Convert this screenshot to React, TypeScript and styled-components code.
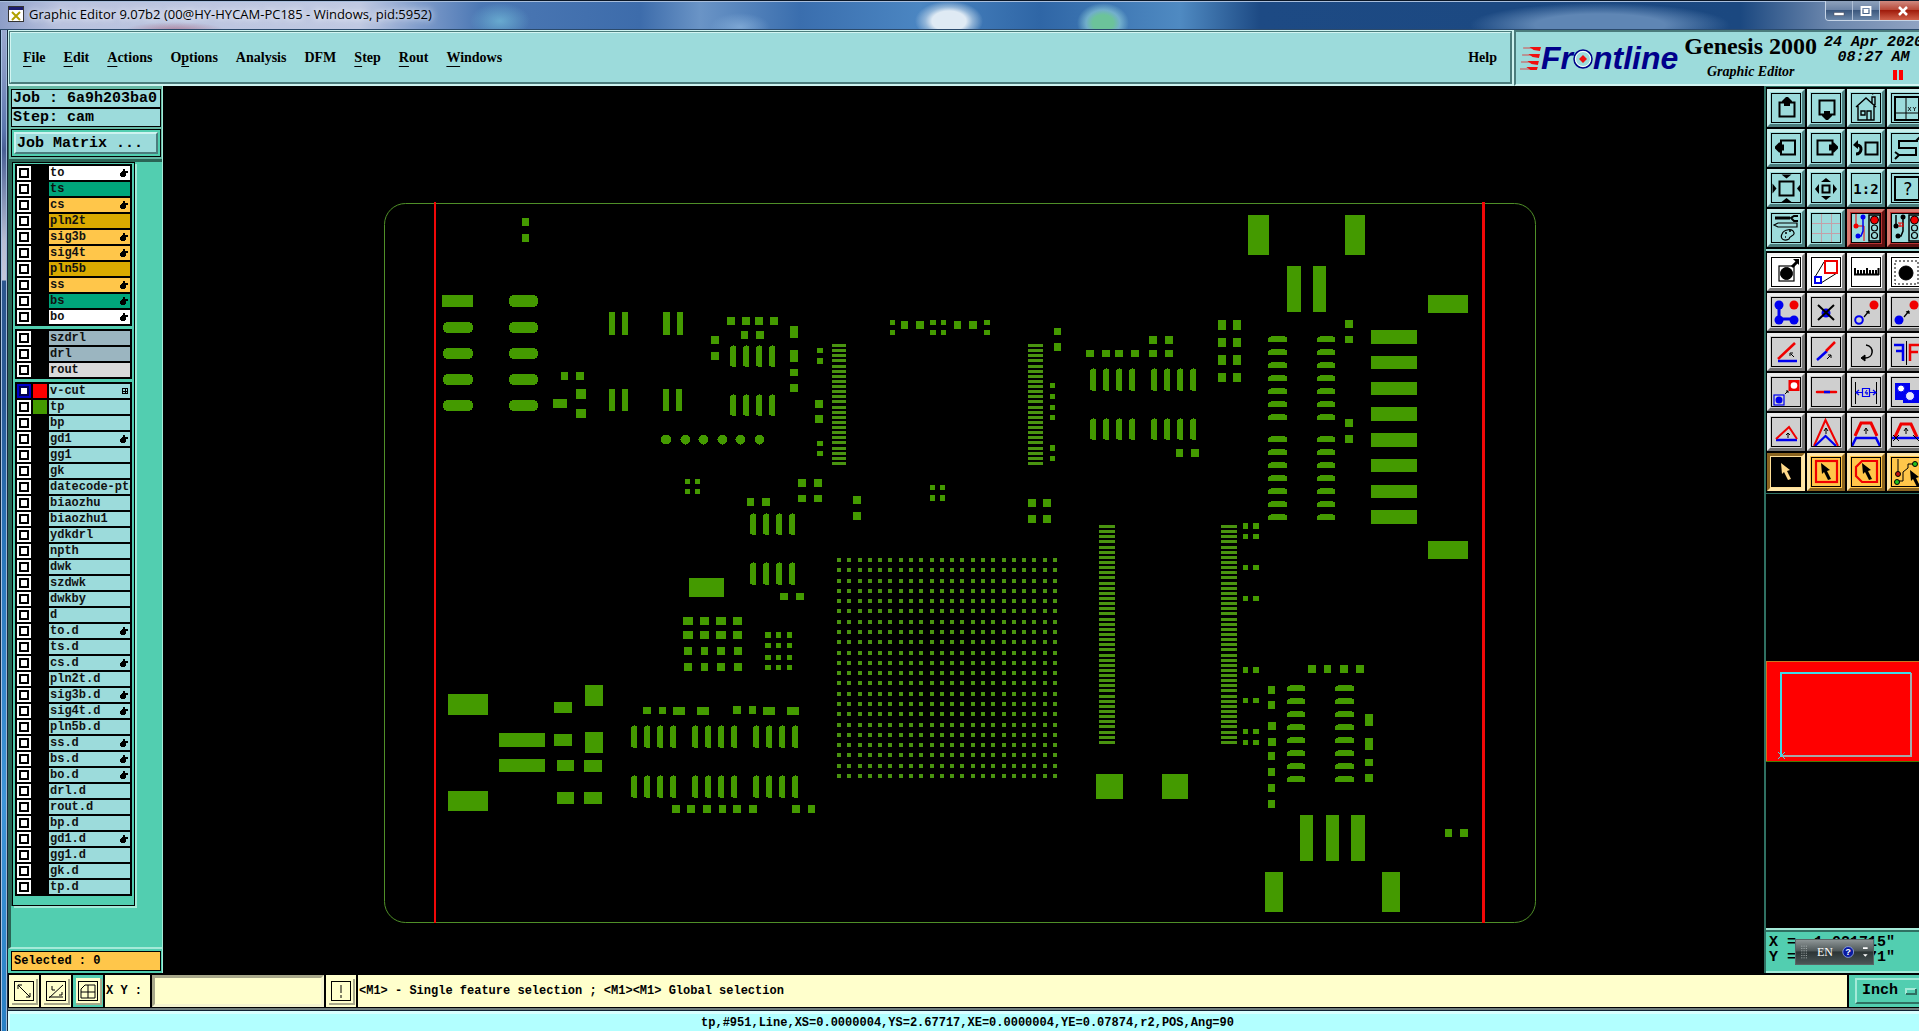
import React, { ReactNode } from 'react';
import styled, { createGlobalStyle, css } from 'styled-components';

const serif = '"Liberation Serif", "Times New Roman", serif';
const mono = '"Liberation Mono", "Courier New", monospace';
const aqua = '#9cdbdb';
const mint = '#52ceb0';
const copper = '#449a00';

const GlobalStyle = createGlobalStyle`
  * { box-sizing: border-box; }
  body { margin: 0; background: #000; overflow: hidden; }
  button, input, select { font: inherit; color: inherit; margin: 0; border-radius: 0; }
`;

/* ---------- window chrome ---------- */

const Desktop = styled.div`
  overflow: hidden;
  width: 100%;
  height: 100vh;
`;

const Frame = styled.div`
  display: flex;
  flex-direction: column;
  width: calc(100% + 8px);
  height: 100%;
  padding-left: 8px;
  background: linear-gradient(90deg, #10243c 0 1px, #a9c4e4 1px 2px, transparent 2px 6px, #9fb9da 6px 7px, #16283c 7px 8px),
    linear-gradient(180deg, #aab4d6 0, #8698c4 70px, #5b76ae 130px, #4a5f95 150px, #b7bdd2 240px, #c4c8da 280px, #2c568e 281px, #2a5a96 400px, #2a74b8 540px, #3f95d8 800px, #2a80c4 100%);
`;

const TitleBar = styled.header`
  display: flex;
  align-items: center;
  flex: 0 0 30px;
  gap: 5px;
  margin-left: -8px;
  padding: 0 0 2px 8px;
  border-top: 1px solid #0a1626;
  border-bottom: 1px solid #2b4a6c;
  box-shadow: inset 0 1px 0 #a8bedc;
  color: #000;
  font: 13px/16px "Open Sans", "Noto Sans", sans-serif;
  background:
    radial-gradient(ellipse 30px 18px at 500px 20px, #6fb6d6cc, transparent),
    radial-gradient(ellipse 50px 8px at 175px 29px, #a86a84aa, transparent),
    radial-gradient(ellipse 30px 14px at 740px 26px, #8fb7e0aa, transparent),
    radial-gradient(ellipse 34px 20px at 949px 20px, #dfeaf4 0 50%, #b8d0e6aa 70%, transparent),
    radial-gradient(ellipse 26px 20px at 1103px 22px, #6cc39a 0 40%, #8ccbd8aa 65%, transparent),
    radial-gradient(ellipse 130px 22px at 1600px 24px, #5f86b4 0 50%, transparent),
    linear-gradient(90deg, #8d9ec8 0, #b9c2de 60px, #c0c9e2 360px, #7f9ccb 420px, #4c78b4 480px, #3d6cab 640px, #6a94c6 700px, #3a6eae 800px, #4b86c2 920px, #2f66a6 1040px, #4f8ac2 1180px, #1d4a84 1260px, #1b4880 1740px, #6c87ad 1830px, #93a5c4 100%);
`;

const Title = styled.span`flex: 1; white-space: nowrap; text-shadow: 0 0 6px #fff, 0 0 8px #dfe6f4;`;

const Caption = styled.div`
  display: flex;
  align-self: flex-start;
  height: 20px;
  border: solid #c6d4e6;
  border-width: 0 1px 1px;
  border-radius: 0 0 4px 4px;
  overflow: hidden;
`;

const CaptionButton = styled.button<{ $close?: boolean }>`
  display: grid;
  place-items: center;
  width: ${p => (p.$close ? 46 : 27)}px;
  padding: 0;
  border: 0;
  border-right: 1px solid #b0c0d6;
  background: ${p => p.$close
    ? 'linear-gradient(#d08a80, #b84a3a 45%, #a01c0c 50%, #d0604a)'
    : 'linear-gradient(#8ea2bc, #6c84a6 45%, #3c587e 50%, #6a86a8)'};
`;

/* ---------- menu row ---------- */

const TopRow = styled.div`
  display: flex;
  flex: 0 0 56px;
  background: #cdf3f0;
`;

const MenuBar = styled.nav`
  display: flex;
  align-items: center;
  flex: 1;
  gap: 18px;
  margin: 1px 2px 2px 1px;
  padding: 0 13px 0 12px;
  border: 2px solid;
  border-color: #d3f5f2 #4b7c7c #4b7c7c #d3f5f2;
  outline: 1px solid #4b7c7c;
  outline-offset: -1px;
  background: ${aqua};
  font: bold 14px/18px ${serif};
`;

const MenuItem = styled.button<{ $end?: boolean }>`
  padding: 0;
  border: 0;
  background: none;
  margin-left: ${p => (p.$end ? 'auto' : '0')};
  u { text-underline-offset: 4px; text-decoration-thickness: 1px; }
`;

const Brand = styled.section`
  display: flex;
  flex: 0 0 413px;
  padding: 0 3px 0 4px;
  gap: 6px;
  background: ${aqua};
  border: solid #4b7c7c;
  border-width: 2px 0 0 2px;
  border-bottom: 2px solid #d3f5f2;
`;

const Logo = styled.div`
  display: flex;
  align-items: center;
  color: #00008b;
  font: italic bold 32px/36px "Liberation Sans", Arial, sans-serif;
  svg { flex: none; }
`;

const Product = styled.div`
  text-align: center;
  font-family: ${serif};
  font-weight: bold;
  white-space: nowrap;
`;
const ProductName = styled.div`font-size: 24px; line-height: 28px;`;
const ProductPart = styled.div`font-size: 14px; line-height: 24px; font-style: italic;`;

const Clock = styled.time`
  flex: none;
  padding: 3px 0 0 1px;
  text-align: center;
  white-space: nowrap;
  font: italic bold 15px/15px ${mono};
  svg { display: block; margin: 5px 0 0 69px; }
`;

/* ---------- left side ---------- */

const Main = styled.main`
  display: flex;
  flex: 1;
  min-height: 0;
  background: #000;
`;

const Side = styled.aside`
  display: flex;
  flex-direction: column;
  flex: 0 0 155px;
  background: ${mint};
  border-right: 1px solid #a4ead8;
`;

const JobInfo = styled.section`
  padding: 3px 1px 2px 2px;
  background: #66b8a4;
  border-left: 1px solid #2a6455;
`;

const InfoLine = styled.div`
  height: 19px;
  padding-left: 1px;
  border: 1px solid #000;
  background: ${aqua};
  font: bold 15px/18px ${mono};
  white-space: pre;
`;

const MatrixBox = styled.div`
  margin-top: 2px;
  padding: 2px;
  border: 1px solid #000;
  background: ${mint};
`;

const MatrixButton = styled.button`
  display: block;
  width: 100%;
  height: 22px;
  padding: 0 0 0 1px;
  border: 2px solid;
  border-color: #cdf3f0 #4b7c7c #4b7c7c #cdf3f0;
  background: ${aqua};
  font: bold 15px/17px ${mono};
  text-align: left;
`;

const LayerPanel = styled.section`
  flex: 1;
  border: solid #2a6455;
  border-width: 3px 0 0 3px;
  border-bottom: 2px solid #a4ead8;
`;

const LayerFrame = styled.div`
  display: flex;
  flex-direction: column;
  gap: 3px;
  width: 123px;
  margin-left: 1px;
  padding: 1px 2px 9px;
  border: 1px solid #000;
  box-shadow: 2px 2px 0 #a4ead8, -1px 0 0 #2a6455;
`;

const LayerGroup = styled.ul`
  display: grid;
  gap: 2px;
  margin: 0;
  padding: 2px;
  list-style: none;
  background: #000;
`;

const LayerRow = styled.li`
  display: grid;
  grid-template-columns: 14px 14px 1fr;
  gap: 2px;
  height: 14px;
`;

const LayerBox = styled.input`
  appearance: none;
  width: 14px;
  height: 14px;
  background: #fff;
  box-shadow: inset 0 0 0 2px #fff, inset 0 0 0 4px #000;
  &:checked { box-shadow: inset 0 0 0 2px #0000c8, inset 0 0 0 4px #000050; }
`;

const Swatch = styled.span<{ $color?: string }>`background: ${p => p.$color ?? '#000'};`;

const LayerName = styled.label<{ $bg: string }>`
  display: flex;
  align-items: center;
  justify-content: space-between;
  min-width: 0;
  overflow: hidden;
  white-space: nowrap;
  padding: 0 2px 0 1px;
  background: ${p => p.$bg};
  font: bold 12px/13px ${mono};
  color: #111;
  svg { flex: none; }
`;

const SelectedBox = styled.div`
  margin: 2px 1px 2px 3px;
  height: 20px;
  padding-left: 2px;
  border: 1px solid #000;
  background: #ffc64a;
  font: bold 12px/18px ${mono};
  white-space: pre;
`;

/* ---------- canvas ---------- */

const Canvas = styled.section`
  flex: 1;
  min-width: 0;
  svg { display: block; width: 100%; height: 100%; }
`;

/* ---------- right side ---------- */

const Tools = styled.aside`
  display: flex;
  flex-direction: column;
  flex: 0 0 163px;
  border-left: 2px solid #2f7062;
`;

const ToolGroup = styled.div`
  display: grid;
  grid-template-columns: repeat(4, 38px);
  gap: 2px;
  padding: 3px 0 2px 1px;
  background: #000;
  & + & { border-top: 2px solid #a4dcd8; padding-top: 2px; }
  &:first-child { border-top: 1px solid #2f7062; padding-top: 2px; }
`;

type Tone = 'aqua' | 'red' | 'white' | 'gray' | 'amber' | 'pressed';
const tones: Record<Tone, [string, string, string, string]> = {
  aqua: [aqua, '#c8efec', '#4b7c7c', aqua],
  red: ['#b83434', '#d87a70', '#5c1010', aqua],
  white: ['#fff', '#f4f4f4', '#808080', '#fff'],
  gray: ['#cfcfcf', '#ececec', '#747474', '#cfcfcf'],
  amber: ['#ffc64a', '#ffe6a8', '#8a6420', '#ffc64a'],
  pressed: ['#ffdf96', '#8a6420', '#ffe6a8', '#000'],
};

const ToolButton = styled.button<{ $tone: Tone }>`
  display: grid;
  place-items: center;
  width: 38px;
  height: 38px;
  padding: 0;
  border: 3px solid;
  ${p => {
    const [bg, light, dark, inner] = tones[p.$tone];
    return css`
      background: ${bg};
      border-color: ${light} ${dark} ${dark} ${light};
      svg { background: ${inner}; outline: 1px solid #000; outline-offset: -1px; }
    `;
  }}
  svg { display: block; }
`;

const MapPane = styled.section`
  display: flex;
  flex: 1;
  align-items: center;
  border-top: 1px solid #2f7062;
  background: #000;
  svg { width: 100%; }
`;

const Coords = styled.section`
  position: relative;
  padding: 5px 0 6px 3px;
  border: solid;
  border-width: 2px 0;
  border-color: #a4ead8;
  background: ${mint};
  box-shadow: inset 0 2px 0 #2f7062;
  font: bold 15px/15px ${mono};
  white-space: pre;
`;

const LangBar = styled.div`
  position: absolute;
  left: 29px;
  top: 9px;
  display: flex;
  align-items: center;
  width: 79px;
  height: 26px;
  padding: 0 5px;
  gap: 9px;
  color: #fff;
  font: 12px/24px ${serif};
  background: linear-gradient(#8d9596, #4f5859 45%, #2c3536 50%, #4a5556);
  border: 1px solid #5a6465;
`;
const LangButton = styled.button`padding: 0; border: 0; background: none; color: #fff;`;

/* ---------- bottom ---------- */

const BottomBar = styled.footer`
  display: flex;
  flex: none;
  gap: 2px;
  height: 35px;
  padding: 2px 0 1px 1px;
  background: #000;
  font: bold 12px/32px ${mono};
`;

const ModeButton = styled.button<{ $on?: boolean }>`
  display: grid;
  place-items: center;
  width: 30px;
  padding: 0;
  border: 3px solid ${p => (p.$on ? mint : '#ffffcc')};
  background: #ffffcc;
  svg { display: block; box-shadow: 0 0 0 2px #ffffcc, 1px 1px 0 3px #a8a88a; }
`;

const XYLabel = styled.label`
  width: 45px;
  padding-left: 1px;
  background: #ffffcc;
  white-space: pre;
`;

const XYInput = styled.input`
  width: 172px;
  padding: 0 4px;
  border: 3px solid;
  border-color: #a8a88a #f4f4d0 #f4f4d0 #a8a88a;
  background: #ffffcc;
  outline: none;
`;

const Message = styled.output`
  flex: 1;
  min-width: 0;
  padding-left: 1px;
  background: #ffffcc;
  white-space: nowrap;
`;

const UnitBox = styled.label`
  display: flex;
  align-items: center;
  width: 78px;
  padding: 3px 0 3px 6px;
  background: ${mint};
`;
const UnitField = styled.span`
  display: flex;
  align-items: center;
  width: 100%;
  height: 26px;
  padding-left: 5px;
  border: 2px solid;
  border-color: #a4ead8 #2f7062 #2f7062 #a4ead8;
`;
const UnitSelect = styled.select`
  appearance: none;
  width: 43px;
  padding: 0;
  border: 0;
  background: transparent;
  font: bold 15px/20px ${mono};
`;

const StatusBar = styled.div`
  flex: none;
  height: 23px;
  border-top: 2px solid #6e7c7c;
  box-shadow: inset 0 1px 0 #123, inset 0 4px 0 #d8ffff, inset 2px 0 0 #d8ffff;
  background: #b2ffff;
  font: bold 12px/26px ${mono};
  text-align: center;
  white-space: nowrap;
`;

/* ---------- board artwork ---------- */

type Box = [number, number, number, number];

const cross = (xs: number[], ys: number[], w: number, h: number): Box[] =>
  ys.flatMap(y => xs.map(x => [x, y, w, h] as Box));
const steps = (from: number, step: number, count: number) =>
  Array.from({ length: count }, (_, i) => Math.round(from + step * i));

const pads: Box[] = [
  ...cross([522], [218, 234], 7, 8),
  [442, 295, 31, 12], [561, 372, 7, 8], [576, 372, 8, 8], [553, 399, 14, 9], [576, 389, 10, 10], [576, 409, 10, 9],
  ...cross([609, 622], [312], 6, 23), [663, 312, 7, 23], [677, 312, 6, 23],
  ...cross([609, 622, 663, 676], [389], 6, 22),
  ...cross([711], [336, 352], 8, 8), ...cross([727, 742, 755, 770], [317], 8, 8), [741, 331, 7, 8], [756, 331, 8, 8],
  ...cross([790], [326, 350], 8, 12), [790, 369, 8, 7], [790, 384, 8, 8],
  [817, 348, 6, 5], [817, 358, 6, 6], ...cross([815], [400, 415], 8, 8), ...cross([817], [441, 451], 6, 5),
  ...cross([685, 695], [479, 489], 5, 5), ...cross([798, 814], [479], 8, 8), ...cross([798, 814], [495], 8, 7),
  [747, 498, 7, 8], [762, 498, 8, 8],
  ...cross([890, 941], [320, 330], 5, 5), ...cross([930, 984], [320, 330], 6, 5),
  ...cross([901, 954], [321], 7, 8), ...cross([916, 969], [321], 8, 8),
  [1054, 328, 7, 7], [1054, 343, 7, 8], ...cross([1050], [383, 394, 405, 415, 456], 5, 5), [1050, 445, 5, 6],
  ...cross([1086, 1102, 1115, 1131, 1149, 1165], [350], 8, 7), ...cross([1149, 1165], [336], 8, 8),
  [1176, 449, 7, 8], [1191, 449, 8, 8],
  ...cross([1218, 1233], [320, 355], 8, 10), ...cross([1218, 1233], [338, 373], 8, 9),
  ...cross([853], [496, 512], 8, 8), ...cross([930, 940], [485], 5, 5), ...cross([930, 940], [495], 5, 6),
  ...cross([1028, 1043], [499, 515], 8, 8),
  [1248, 215, 21, 40], [1345, 215, 20, 40], [1287, 266, 14, 46], [1313, 266, 13, 46],
  ...cross([1428], [295, 541], 40, 18),
  ...cross([1345], [320, 419, 435], 8, 8), [1345, 336, 8, 7],
  ...cross([1371], [330, 407, 433, 510], 46, 14), ...cross([1371], [356, 382, 459, 485], 46, 13),
  ...cross([1243], [523, 667], 5, 6), ...cross([1253], [523, 667], 6, 6),
  ...cross([1243], [534, 565, 596, 698, 729, 740], 5, 5), ...cross([1253], [534, 565, 596, 698, 729, 740], 6, 5),
  ...cross([1308, 1340, 1356], [665], 8, 8), [1324, 665, 7, 8],
  ...cross([1268], [686, 701, 752, 768, 784, 800], 7, 8), ...cross([1268], [722, 738], 8, 8),
  ...cross([1365], [714, 738], 8, 12), [1365, 759, 8, 7], [1365, 774, 8, 8],
  ...cross([1300, 1326], [815], 13, 46), [1351, 815, 14, 46], ...cross([1265, 1382], [872], 18, 40),
  [1445, 829, 7, 8], [1460, 829, 8, 8],
  [689, 578, 35, 19], ...cross([780, 796], [593], 8, 7),
  ...cross([683, 716], [617, 631], 10, 8), ...cross([700, 733], [617, 631], 9, 8),
  ...cross([684, 717, 734], [647, 663], 8, 8), ...cross([701], [647, 663], 7, 8),
  [765, 632, 6, 6], ...cross([776, 787], [632], 5, 6), ...cross([765], [643, 655, 665], 6, 5), ...cross([776, 787], [643, 655, 665], 5, 5),
  [448, 694, 40, 21], [448, 791, 40, 20], [554, 702, 18, 11], [554, 734, 18, 12], ...cross([585], [685, 732], 18, 21),
  [499, 733, 46, 14], [499, 759, 46, 13], [557, 760, 17, 11], [557, 792, 17, 12], ...cross([584], [760, 792], 18, 12),
  [643, 707, 8, 7], [659, 707, 7, 7], ...cross([673, 697, 763, 787], [707], 12, 8), [733, 706, 8, 8], [749, 706, 7, 8],
  ...cross([672, 687, 703, 733, 749, 792], [805], 8, 8), ...cross([719, 808], [805], 7, 8),
  [1096, 774, 27, 25], [1162, 774, 26, 25],
];

const ovals: Box[] = [
  ...cross([443], [322, 348, 374, 400], 30, 11), [509, 295, 29, 12], ...cross([509], [322, 348, 374, 400], 29, 11),
];

const fingers: Box[] = [
  ...cross([730, 743, 756, 769], [345, 394], 6, 22),
  ...cross([1090, 1103, 1116, 1129, 1151, 1164, 1177, 1190], [368], 6, 23),
  ...cross([1090, 1103, 1116, 1129, 1151, 1164, 1177, 1190], [418], 6, 22),
  ...cross([750, 763, 776, 789], [513], 6, 22), ...cross([750, 763, 776, 789], [562], 6, 23),
  ...cross([631, 644, 657, 670, 692, 705, 718, 731, 753, 766, 779, 792], [725, 775], 6, 23),
];

const leads: Box[] = [
  ...cross([1268], steps(336, 13, 7), 19, 6), ...cross([1317], steps(336, 13, 7), 18, 6),
  ...cross([1268], steps(436, 13, 7), 19, 6), ...cross([1317], steps(436, 13, 7), 18, 6),
  ...cross([1287], steps(685, 13, 8), 18, 6), ...cross([1335], steps(685, 13, 8), 19, 6),
];

const combs: Box[] = [
  ...cross([832], steps(344, 5.13, 24), 14, 3), ...cross([1028], steps(344, 5.13, 24), 15, 3),
  ...cross([1099, 1221], steps(525, 5.14, 43), 16, 3),
];

const ballGrid = cross(steps(837, 10.286, 22), steps(558, 10.286, 22), 4, 4);

const rectPath = (list: Box[]) => list.map(([x, y, w, h]) => `M${x} ${y}h${w}v${h}h${-w}z`).join('');
const leadPath = (list: Box[]) =>
  list.map(([x, y, w, h]) => `M${x} ${y + 2}h1v-1h2v-1h${w - 5}v1h2v${h - 1}h${-w}z`).join('');
const fingerPath = (list: Box[]) =>
  list.map(([x, y, , h]) => `M${x} ${y + 2}h1v-1h2v-1h1v1h2v${h - 1}h-4v-1h-2z`).join('');

function Board() {
  return (
    <svg viewBox="163 86 1601 887" role="img" aria-label="Board view">
      <rect x="384.5" y="203.5" width="1151" height="719" rx="21" fill="none" stroke="#4f8f28" />
      <g fill={copper} shapeRendering="crispEdges">
        <path d={rectPath(pads)} />
        <path d={fingerPath(fingers)} />
        <path d={leadPath(leads)} />
        {ovals.map(([x, y, w, h]) => <rect key={`${x}-${y}`} x={x} y={y} width={w} height={h} rx="5" />)}
        {[666, 685.5, 703.5, 722.5, 740.5, 759.5].map(x => <circle key={x} cx={x} cy="439.5" r="5" />)}
        <path d={rectPath(ballGrid)} fill="#4a9410" />
        <path d={rectPath(combs)} fill="#4a9410" />
      </g>
      <g fill="#f00808" shapeRendering="crispEdges">
        <rect x="434" y="202" width="2" height="721" />
        <rect x="1482" y="202" width="3" height="721" />
      </g>
    </svg>
  );
}

/* ---------- layers ---------- */

type Layer = { name: string; bg?: string; hand?: boolean; swatch?: string; active?: boolean };
const parse = (text: string): Layer[] =>
  text.split(' ').map(word => ({ name: word.replace('*', ''), hand: word.endsWith('*') }));

const boardLayers: Layer[] = [
  { name: 'to', bg: '#fff', hand: true }, { name: 'ts', bg: '#00a57b' }, { name: 'cs', bg: '#ffc64a', hand: true },
  { name: 'pln2t', bg: '#daaa00' }, { name: 'sig3b', bg: '#ffc64a', hand: true }, { name: 'sig4t', bg: '#ffc64a', hand: true },
  { name: 'pln5b', bg: '#daaa00' }, { name: 'ss', bg: '#ffc64a', hand: true }, { name: 'bs', bg: '#00a57b', hand: true },
  { name: 'bo', bg: '#fff', hand: true },
];
const drillLayers: Layer[] = [
  { name: 'szdrl', bg: '#9bb5c0' }, { name: 'drl', bg: '#9bb5c0' }, { name: 'rout', bg: '#dadada' },
];
const miscLayers: Layer[] = [
  { name: 'v-cut', swatch: '#f00', active: true }, { name: 'tp', swatch: copper },
  ...parse('bp gd1* gg1 gk datecode-ptc biaozhu biaozhu1 ydkdrl npth dwk szdwk dwkby d to.d* ts.d cs.d* pln2t.d sig3b.d* sig4t.d* pln5b.d ss.d* bs.d* bo.d* drl.d rout.d bp.d gd1.d* gg1.d gk.d tp.d'),
];

const Hand = () => (
  <svg width="8" height="8" viewBox="0 0 8 8" aria-hidden="true"><path d="M3 0h2v2h3v2H6v3H5v1H1V7H0V4h1V3h1V2h1z" /></svg>
);
const GridMark = () => (
  <svg width="6" height="6" viewBox="0 0 6 6" aria-hidden="true" shapeRendering="crispEdges">
    <path d="M.5.5h5v5h-5zM3 0v6M0 3h6" fill="none" stroke="#000" />
  </svg>
);

function Layers({ items }: { items: Layer[] }) {
  return (
    <LayerGroup>
      {items.map(l => (
        <LayerRow key={l.name}>
          <LayerBox type="checkbox" id={`layer-${l.name}`} defaultChecked={l.active} />
          <Swatch $color={l.swatch} />
          <LayerName htmlFor={`layer-${l.name}`} $bg={l.bg ?? aqua}>
            {l.name}
            {l.hand && <Hand />}
            {l.active && <GridMark />}
          </LayerName>
        </LayerRow>
      ))}
    </LayerGroup>
  );
}

/* ---------- tool icons, drawn in button coordinates ---------- */

type Tool = { label: string; tone: Tone; art: ReactNode };
const R = '#f00000';
const B = '#0000f0';

const up = (x: number, y: number) => <path d={`M${x - 5} ${y + 5}l4-4h2l4 4v2h-2v3h-6v-3h-2z`} fill="#000" stroke="none" />;
const turned = (x: number, y: number, deg: number) => <g transform={`translate(${x} ${y}) rotate(${deg})`}>{up(0, 0)}</g>;
const tri = (x: number, y: number, deg: number) => (
  <path d="M-5 4l5-4 5 4z" fill="#000" stroke="none" transform={`translate(${x} ${y}) rotate(${deg})`} />
);
const cursor = (fill: string, x = 14, y = 10) => (
  <path d="M0 0l9 7-3 1 4 8-3 1-4-8-2 2z" transform={`translate(${x} ${y})`} fill={fill} stroke="none" />
);
const lights = (
  <>
    <rect x="22" y="6" width="11" height="26" strokeWidth="1.5" />
    <circle cx="27.500" cy="11" r="4" fill={R} stroke="#000" strokeWidth="1" />
    <circle cx="27.500" cy="19" r="3" strokeWidth="1.2" />
    <circle cx="27.500" cy="26.500" r="3" strokeWidth="1.2" />
  </>
);

const viewTools: Tool[] = [
  { label: 'Pan up', tone: 'aqua', art: <><rect x="12.500" y="13.500" width="15" height="14" strokeWidth="2" />{up(20, 7)}</> },
  { label: 'Pan down', tone: 'aqua', art: <><rect x="12.500" y="11.500" width="15" height="14" strokeWidth="2" />{turned(20, 32, 180)}</> },
  { label: 'Home', tone: 'aqua', art: <path d="M9 18L19 9l10 9M11 17v14h16V17M14 22h4v4h-4zM20 31v-9h4v9M25 14V8h3v8M25 5l2-1M28 3l2-1" strokeWidth="1.4" /> },
  { label: 'Zoom XY', tone: 'aqua', art: <><rect x="8" y="8" width="24" height="23" strokeWidth="2" /><path d="M19 8v23M8 24h24" strokeWidth="1" /><path d="M21 18l3 4M24 18l-3 4M26 18l1.500 2 1.500-2M27.500 20v2" strokeWidth=".8" /></> },
  { label: 'Pan left', tone: 'aqua', art: <><rect x="14" y="11.500" width="14" height="14" strokeWidth="2" />{turned(7, 18.5, -90)}</> },
  { label: 'Pan right', tone: 'aqua', art: <><rect x="10.500" y="11.500" width="15" height="14" strokeWidth="2" />{turned(32, 18.5, 90)}</> },
  { label: 'Previous view', tone: 'aqua', art: <><rect x="18.500" y="13.500" width="12" height="12" strokeWidth="2" /><path d="M9 25c6 0 7-9 1-9" strokeWidth="3" /><path d="M6 16l5-5v9z" fill="#000" stroke="none" /></> },
  { label: 'Serpentine', tone: 'aqua', art: <path d="M31 12H12v7h17v7H12M12 26l-4-3M12 26l-4 4M29 12l4-4" strokeWidth="2" /> },
  { label: 'Zoom out', tone: 'aqua', art: <><rect x="12.500" y="12.500" width="14" height="14" strokeWidth="2" />{tri(19.5, 9.5, 180)}{tri(19.5, 29, 0)}{tri(9.5, 19.5, 90)}{tri(30, 19.5, -90)}</> },
  { label: 'Zoom in', tone: 'aqua', art: <><rect x="15.500" y="16.500" width="7" height="7" strokeWidth="2" />{tri(19, 9, 0)}{tri(19, 31, 180)}{tri(8, 20, -90)}{tri(30, 20, 90)}</> },
  { label: 'Scale 1:2', tone: 'aqua', art: <text x="19" y="25" textAnchor="middle" fontFamily="DejaVu Sans Mono" fontSize="14" fontWeight="bold" fill="#000" stroke="none">1:2</text> },
  { label: 'Query', tone: 'aqua', art: <><rect x="8" y="8" width="24" height="23" strokeWidth="2" /><text x="20.500" y="26" textAnchor="middle" fontFamily="DejaVu Sans Mono" fontSize="17" fill="#000" stroke="none">?</text></> },
  { label: 'Settings', tone: 'aqua', art: <><path d="M8 9h15" strokeWidth="3" /><path d="M31 7h-4l-3 2 3 3h4" strokeWidth="2" /><path d="M7 16l4-2h19v4H11zM15 25c2-5 11-6 12-1 1 3-5 3-5 6-6 3-9-1-7-5z" strokeWidth="1.2" /><path d="M18 24h2M22 22h2M18 28h1" strokeWidth="1.5" /></> },
  { label: 'Grid', tone: 'aqua', art: <path d="M14.500 5v28M24.500 5v28M5 14.500h28M5 24.500h28" stroke="#c4a0a8" strokeWidth="1" /> },
  { label: 'Highlight net', tone: 'red', art: <><path d="M9 5v12l8 0V32" stroke={R} strokeWidth="1" /><path d="M16 8v14l-2 5h-4" stroke={B} strokeWidth="1.5" /><circle cx="9" cy="17" r="2.500" fill={R} stroke="none" /><circle cx="16" cy="8" r="2.500" fill={B} stroke="none" /><circle cx="11" cy="27" r="2.500" fill={B} stroke="none" />{lights}</> },
  { label: 'Select net', tone: 'red', art: <><path d="M9 6v10M16 8v14l-2 5h-4" strokeWidth="1.5" /><path d="M11 14h5M11 17h5M13 14v4M16 14v4" stroke={R} strokeWidth="1" /><circle cx="9" cy="17" r="2.500" fill="#000" stroke="none" /><circle cx="16" cy="8" r="2.500" fill="#000" stroke="none" /><circle cx="11" cy="27" r="2.500" fill="#000" stroke="none" />{lights}</> },
];

const nib = <path d="M17 24l5-6M22 18l-3 1M22 18v3" strokeWidth="1.200" />;
const editTools: Tool[] = [
  { label: 'Move', tone: 'white', art: <><rect x="12" y="13" width="15" height="15" strokeWidth="1.200" /><circle cx="19.500" cy="20.500" r="6" fill="#000" /><path d="M25 14l5-5" strokeWidth="3" /><path d="M26 6h6v6z" fill="#000" stroke="none" /></> },
  { label: 'Resize', tone: 'white', art: <><path d="M8 24l9-15M14 30l16-10" strokeWidth="1" /><rect x="18" y="8" width="12" height="12" stroke={R} strokeWidth="2" /><rect x="8" y="24" width="6" height="6" stroke={B} strokeWidth="2" /></> },
  { label: 'Measure', tone: 'white', art: <path d="M7 21.500h25M8 15v7M11 17v5M14 17v5M17 17v5M20 15v7M23 17v5M26 17v5M29 17v5M31.500 15v7" strokeWidth="2" /> },
  { label: 'Select area', tone: 'white', art: <><rect x="8" y="8" width="23" height="23" strokeDasharray="2 2" strokeWidth="1" /><circle cx="19" cy="20" r="7" fill="#000" /></> },
  { label: 'Connect', tone: 'gray', art: <><path d="M12 12v14h15" stroke={B} strokeWidth="3" /><circle cx="12" cy="12" r="4.500" fill={B} stroke="none" /><circle cx="12" cy="27" r="4.500" fill={B} stroke="none" /><circle cx="27" cy="27" r="4.500" fill={B} stroke="none" /><circle cx="27" cy="12" r="4.500" fill={R} stroke="none" /></> },
  { label: 'Delete', tone: 'gray', art: <><circle cx="19" cy="20" r="4.500" fill={B} stroke="none" /><path d="M11 12l16 15M27 12L11 27" strokeWidth="2" /></> },
  { label: 'Copy', tone: 'gray', art: <><circle cx="12" cy="27" r="3.800" stroke={B} strokeWidth="2" /><circle cx="27" cy="12" r="4.500" fill={R} stroke="none" />{nib}</> },
  { label: 'Shift', tone: 'gray', art: <><circle cx="12" cy="27" r="4.500" fill={B} stroke="none" /><circle cx="27" cy="12" r="4.500" fill={R} stroke="none" />{nib}</> },
  { label: 'Angle', tone: 'gray', art: <><path d="M11 28h19" stroke={B} strokeWidth="2.500" /><path d="M11 26L28 10" stroke={R} strokeWidth="2.500" /><path d="M27 24l-3-3M23 20v3M23 20h3" strokeWidth="1" /></> },
  { label: 'Extend line', tone: 'gray', art: <><path d="M10 27l10-9" stroke={B} strokeWidth="2.500" /><path d="M19 18l9-9" stroke={R} strokeWidth="2.500" /><path d="M20 26l4-4M24 22h-3M24 22v3" strokeWidth="1" /></> },
  { label: 'Rotate', tone: 'gray', art: <><path d="M19 12c9 1 8 14-2 13" strokeWidth="1.500" /><path d="M14 25l4-3v6z" fill="#000" /></> },
  { label: 'Mirror', tone: 'gray', art: <><path d="M19.500 8v24" strokeWidth="1" /><path d="M7 12h9v16M9 18h7" stroke={B} strokeWidth="2.500" /><path d="M33 12H23v16M23 19h8" stroke={R} strokeWidth="2.500" /></> },
  { label: 'Substitute', tone: 'gray', art: <><rect x="7" y="22" width="10" height="10" stroke={B} strokeWidth="1.200" /><circle cx="12" cy="27" r="3.500" fill={B} stroke="none" /><rect x="21.500" y="7" width="11" height="11" fill={R} stroke="none" /><circle cx="27" cy="12.500" r="3.300" fill="#fff" stroke="none" /><path d="M18 21l3-3M21 18h-2M21 18v2" strokeWidth="1" /></> },
  { label: 'Break', tone: 'gray', art: <><path d="M10 19h19" stroke={R} strokeWidth="2.500" strokeLinecap="round" /><path d="M17 19h6" stroke={B} strokeWidth="2.500" /></> },
  { label: 'Spacing', tone: 'gray', art: <><path d="M8.500 9v22M29.500 9v22" strokeWidth="1" /><path d="M9 19.500h6M23 19.500h6M12 17l-3 2.500 3 2.500M26 17l3 2.500-3 2.500M15.500 15.500h7v8h-7z" stroke={B} strokeWidth="1.200" /><path d="M20 17l-2 3h3M20 19v3" stroke={B} strokeWidth="1" /></> },
  { label: 'Merge', tone: 'gray', art: <><rect x="8" y="10" width="15" height="17" fill={B} stroke="none" /><rect x="16" y="17" width="16" height="13" fill={B} stroke="none" /><circle cx="14" cy="15.500" r="3.500" fill="#fff" stroke={B} /><circle cx="23" cy="23" r="4.500" fill="#e4e4ff" stroke={B} /></> },
  { label: 'Triangle', tone: 'gray', art: <><path d="M9 27h21" stroke={B} strokeWidth="2.500" /><path d="M9 26l13-12 8 12" stroke={R} strokeWidth="2" /><path d="M21 25v-5M19 22l2-2 2 2" strokeWidth="1" /></> },
  { label: 'Peak', tone: 'gray', art: <><path d="M7 33L18.500 7l12.500 26" stroke={R} strokeWidth="2" /><path d="M8 33l10.500-10L29 33" stroke={B} strokeWidth="2.200" /><path d="M19 21v-6M17 18l2-3 2 3" strokeWidth="1" /></> },
  { label: 'Trapezoid', tone: 'gray', art: <><path d="M8 23l6-13h10l6 13" stroke={R} strokeWidth="3" /><path d="M5 33l4-8h20l4 8" stroke={B} strokeWidth="2.500" /><path d="M19 21v-6M17 18l2-3 2 3" strokeWidth="1" /></> },
  { label: 'Trim', tone: 'gray', art: <><path d="M8 24l6-13h10l6 13" stroke={R} strokeWidth="3" /><path d="M5 25h28" stroke={B} strokeWidth="2.500" /><path d="M19 21v-6M17 18l2-3 2 3M6 22l6 6M12 22l-6 6M26 22l6 6" strokeWidth="1" /></> },
  { label: 'Pointer', tone: 'pressed', art: cursor('#ffd98a') },
  { label: 'Select rectangle', tone: 'amber', art: <><rect x="9" y="8" width="21" height="21" stroke={R} strokeWidth="2.200" />{cursor('#000')}</> },
  { label: 'Select polygon', tone: 'amber', art: <><path d="M15 8h15v21H15l-6-6v-9z" stroke={R} strokeWidth="2.200" />{cursor('#000', 15)}</> },
  { label: 'Select net path', tone: 'amber', art: <><path d="M11 6v13M10 28h6v-9l5-4v-4h6" strokeWidth="1" /><circle cx="11" cy="21" r="2.500" fill="#c01010" /><circle cx="10" cy="29" r="2.500" fill="#20c020" /><circle cx="28" cy="11" r="2.500" fill="#20c020" />{cursor('#000', 23, 17)}</> },
];

function Toolset({ tools }: { tools: Tool[] }) {
  return (
    <ToolGroup>
      {tools.map(t => (
        <ToolButton key={t.label} $tone={t.tone} aria-label={t.label}>
          <svg width="30" height="30" viewBox="4 4 30 30" fill="none" stroke="#000">{t.art}</svg>
        </ToolButton>
      ))}
    </ToolGroup>
  );
}

const BarIcon = ({ d }: { d: string }) => (
  <svg width="20" height="20" viewBox="0 0 20 20" fill="none" stroke="#000" aria-hidden="true">
    <rect x=".5" y=".5" width="19" height="19" />
    <path d={d} />
  </svg>
);

const menus = [['', 'F', 'ile'], ['', 'E', 'dit'], ['', 'A', 'ctions'], ['O', 'p', 'tions'], ['Analysis', '', ''], ['DFM', '', ''], ['', 'S', 'tep'], ['', 'R', 'out'], ['', 'W', 'indows']];

export default function App() {
  return (
    <Desktop>
      <GlobalStyle />
      <Frame>
        <TitleBar>
          <svg width="16" height="16" viewBox="0 0 16 16" aria-hidden="true">
            <rect x=".5" y=".5" width="15" height="15" fill="#fff" stroke="#333" />
            <path d="M1 1h14v3H1z" fill="#1c1c70" />
            <path d="M4 6l8 8M12 6l-8 8" stroke="#b0a000" strokeWidth="2" />
          </svg>
          <Title>Graphic Editor 9.07b2 (00@HY-HYCAM-PC185 - Windows, pid:5952)</Title>
          <Caption>
            <CaptionButton aria-label="Minimize"><svg width="12" height="12" viewBox="0 0 12 12"><path d="M1 7.500h10v3H1z" fill="#fff" stroke="#445" strokeWidth=".5" /></svg></CaptionButton>
            <CaptionButton aria-label="Maximize"><svg width="12" height="12" viewBox="0 0 12 12"><path d="M1.500 2h9v8h-9zM4.500 5h3v2h-3z" fill="none" stroke="#fff" strokeWidth="1.800" /></svg></CaptionButton>
            <CaptionButton $close aria-label="Close"><svg width="12" height="12" viewBox="0 0 12 12"><path d="M2 2l8 8M10 2l-8 8" stroke="#fff" strokeWidth="2.500" /></svg></CaptionButton>
          </Caption>
        </TitleBar>

        <TopRow>
          <MenuBar>
            {menus.map(([a, key, b]) => (
              <MenuItem key={a + key + b}>{a}{key && <u>{key}</u>}{b}</MenuItem>
            ))}
            <MenuItem $end>Help</MenuItem>
          </MenuBar>
          <Brand>
            <Logo>
              <svg width="21" height="24" viewBox="0 0 20 24" preserveAspectRatio="none" aria-hidden="true">
                <g stroke="#f01010" fill="#f01010">
                  <path d="M3 2h14M2 9h14M1 16h14M0 23h14" strokeWidth="1" opacity=".7" />
                  <path d="M9 1h11l-1 4-6-1zM8 8h11l-1 4-6-1zM7 15h11l-1 4-6-1zM6 21h11l-1 3h-6z" stroke="none" />
                </g>
              </svg>
              Fr
              <svg width="20" height="22" viewBox="0 0 20 22" aria-hidden="true">
                <circle cx="10" cy="12" r="9" fill={aqua} stroke="#00008b" strokeWidth="1.500" />
                <circle cx="10" cy="12" r="7.500" fill="none" stroke="#fff" strokeWidth="1" />
                <path d="M10 8l4 4-4 4-4-4z" fill="#f01010" />
              </svg>
              ntline
            </Logo>
            <Product>
              <ProductName>Genesis 2000</ProductName>
              <ProductPart>Graphic Editor</ProductPart>
            </Product>
            <Clock>
              <div>24 Apr 2020</div>
              <div>08:27 AM</div>
              <svg width="10" height="10" viewBox="0 0 10 10" aria-hidden="true"><path d="M0 0h4v10H0zM6 0h4v10H6z" fill="#f00" /></svg>
            </Clock>
          </Brand>
        </TopRow>

        <Main>
          <Side>
            <JobInfo>
              <InfoLine>Job : 6a9h203ba0</InfoLine>
              <InfoLine>Step: cam</InfoLine>
              <MatrixBox><MatrixButton>Job Matrix ...</MatrixButton></MatrixBox>
            </JobInfo>
            <LayerPanel>
              <LayerFrame>
                <Layers items={boardLayers} />
                <Layers items={drillLayers} />
                <Layers items={miscLayers} />
              </LayerFrame>
            </LayerPanel>
            <SelectedBox>Selected : 0</SelectedBox>
          </Side>

          <Canvas><Board /></Canvas>

          <Tools>
            <Toolset tools={viewTools} />
            <Toolset tools={editTools} />
            <MapPane>
              <svg viewBox="0 0 161 101" role="img" aria-label="Overview map" shapeRendering="crispEdges">
                <rect width="161" height="101" fill="#f00" />
                <path d="M0.500 101V.5h161" fill="none" stroke="#c87820" />
                <path d="M0 100.500h161" stroke="#4a7a00" />
                <path d="M145 12v83H15" fill="none" stroke="#a8a8a8" strokeWidth="2" />
                <path d="M15 96V12h130" fill="none" stroke="#40dce8" strokeWidth="2" />
                <path d="M12 91l7 7M19 91l-7 7" stroke="#40dce8" />
              </svg>
            </MapPane>
            <Coords>
              <div>{'X =  1.021715"'}</div>
              <div>{'Y =  2.677171"'}</div>
              <LangBar>
                <svg width="9" height="18" viewBox="0 0 9 18" aria-hidden="true">
                  <path d="M1 1v17M4 1v17M7 1v17" stroke="#b8c0c0" strokeDasharray="1 2" strokeWidth="1.500" />
                </svg>
                <LangButton>EN</LangButton>
                <svg width="16" height="16" viewBox="0 0 16 16" aria-hidden="true">
                  <circle cx="8" cy="8" r="7" fill="#0a1aa0" stroke="#9ab0f0" />
                  <text x="8" y="12.500" textAnchor="middle" fill="#fff" fontFamily="Liberation Sans" fontWeight="bold" fontSize="12">?</text>
                </svg>
                <svg width="6" height="16" viewBox="0 0 6 16" aria-hidden="true"><path d="M0 2h6v2H0zM0 11h6l-3 3z" fill="#fff" /></svg>
              </LangBar>
            </Coords>
          </Tools>
        </Main>

        <BottomBar>
          <ModeButton aria-label="Snap diagonal"><BarIcon d="M4 4l12 12M4 8V4h4M16 12v4h-4" /></ModeButton>
          <ModeButton aria-label="Angle mode"><BarIcon d="M3 16h14M3 17L17 4M6 5v4h3M13 14h3v-3" /></ModeButton>
          <ModeButton $on aria-label="Grid mode"><BarIcon d="M3 17V8l4-4h10v13zM10 4v13M3 11h14" /></ModeButton>
          <XYLabel htmlFor="xy">X Y :</XYLabel>
          <XYInput id="xy" type="text" />
          <ModeButton aria-label="Alerts"><BarIcon d="M10 4v8M10 14v3" /></ModeButton>
          <Message>{'<M1> - Single feature selection ; <M1><M1> Global selection'}</Message>
          <UnitBox>
            <UnitField>
              <UnitSelect aria-label="Units" defaultValue="Inch">
                <option>Inch</option>
                <option>MM</option>
              </UnitSelect>
              <svg width="12" height="7" viewBox="0 0 12 7" aria-hidden="true"><path d="M1 6V1h10" fill="none" stroke="#a4ead8" strokeWidth="2" /><path d="M11 1v5H1" fill="none" stroke="#2f7062" strokeWidth="2" /></svg>
            </UnitField>
          </UnitBox>
        </BottomBar>
        <StatusBar>tp,#951,Line,XS=0.0000004,YS=2.67717,XE=0.0000004,YE=0.07874,r2,POS,Ang=90</StatusBar>
      </Frame>
    </Desktop>
  );
}
